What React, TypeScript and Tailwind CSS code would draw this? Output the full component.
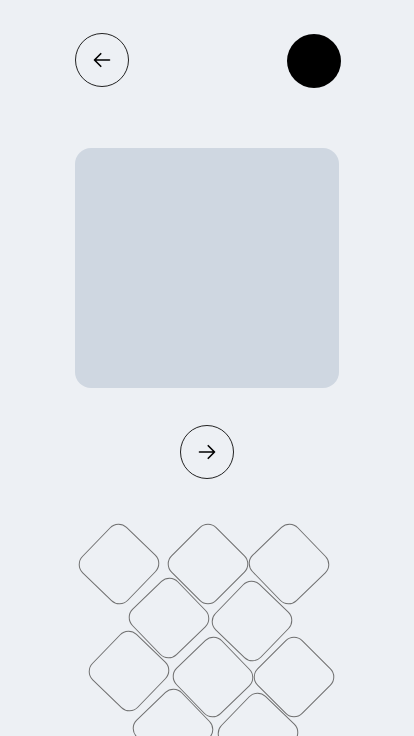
import React from "react";

function Arrow({ dir }: { dir: "left" | "right" }) {
  return (
    <svg width="20" height="20" viewBox="0 0 24 24" fill="none" stroke="#000" strokeWidth={2} strokeLinecap="round" strokeLinejoin="round">
      {dir === "left" ? (
        <path d="M10.5 19.5 3 12m0 0 7.5-7.5M3 12h18" />
      ) : (
        <path d="M13.5 4.5 21 12m0 0-7.5 7.5M21 12H3" />
      )}
    </svg>
  );
}

function Diamond({ cls }: { cls: string }) {
  return <div className={"w-[64px] h-[64px] shrink-0 rounded-[12px] border border-[#6f6f6f] " + cls} />;
}

export default function App() {
  return (
    <div className="h-screen w-full overflow-hidden bg-[#edf0f4]" style={{ fontFamily: "Inter, sans-serif" }}>
      <div className="flex flex-col">
        <div className="mx-[75px] mt-[33px] flex items-start justify-between">
          <button className="flex h-[54px] w-[54px] items-center justify-center rounded-full border border-[#222]">
            <Arrow dir="left" />
          </button>
          <div className="-mr-[2px] mt-[1px] h-[54px] w-[54px] rounded-full bg-black" />
        </div>
        <div className="mx-[75px] mt-[60px] h-[240px] rounded-2xl bg-[#cfd7e1]" />
        <div className="mt-[37px] flex justify-center">
          <button className="flex h-[54px] w-[54px] items-center justify-center rounded-full border border-[#222]">
            <Arrow dir="right" />
          </button>
        </div>
        <div className="mt-[53px] flex flex-col">
          <div className="flex h-[55px] pl-[87px]">
            <Diamond cls="rotate-[44deg]" />
            <Diamond cls="ml-[25px] rotate-45" />
            <Diamond cls="ml-[17px] rotate-[46deg]" />
          </div>
          <div className="flex h-[55px] pl-[137px]">
            <Diamond cls="-translate-y-[1px] rotate-[46deg]" />
            <Diamond cls="ml-[19px] translate-y-[2px] rotate-[44deg]" />
          </div>
          <div className="flex h-[57px] pl-[97px]">
            <Diamond cls="-translate-y-[3px] rotate-[44deg]" />
            <Diamond cls="ml-[20px] translate-y-[3px] rotate-[46deg]" />
            <Diamond cls="ml-[17px] translate-y-[3px] rotate-45" />
          </div>
          <div className="flex h-[64px] pl-[141px]">
            <Diamond cls="-translate-y-[2px] rotate-[46deg]" />
            <Diamond cls="ml-[21px] translate-y-[2px] rotate-[44deg]" />
          </div>
        </div>
      </div>
    </div>
  );
}
